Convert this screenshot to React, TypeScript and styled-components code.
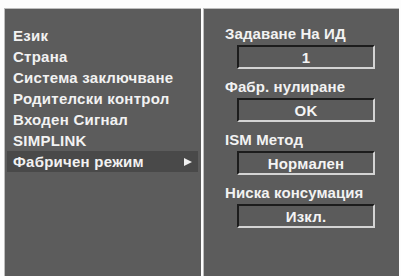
import React from "react";
import styled, { createGlobalStyle } from "styled-components";

const Global = createGlobalStyle`
  html, body { margin: 0; padding: 0; background: #ffffff; }
  body { font-family: "Liberation Sans", Arial, sans-serif; }
`;

const Screen = styled.div`
  display: flex;
  width: 401px;
  height: 276px;
  box-sizing: border-box;
  padding: 8px 2px 0 4px;
  gap: 2px;
  background: #fdfdfd;
`;

const Panel = styled.div<{ $w: number }>`
  width: ${(p) => p.$w}px;
  height: 100%;
  box-sizing: border-box;
  background: #5c5c5c;
  border-top: 1px solid #bdbdbd;
  border-left: 1px solid #bdbdbd;
  display: flex;
  flex-direction: column;
`;

const Menu = styled.div`
  display: flex;
  flex-direction: column;
  padding: 16px 3px 0 2px;
`;

const Row = styled.div<{ $active?: boolean }>`
  display: flex;
  align-items: center;
  justify-content: space-between;
  height: 21px;
  padding: 0 6px 0 6px;
  background: ${(p) => (p.$active ? "#494949" : "transparent")};
  color: #f2f2f2;
  font-size: 15px;
  letter-spacing: 0.25px;
  font-weight: bold;
  white-space: nowrap;
`;

const Arrow = styled.span`
  width: 0;
  height: 0;
  border-top: 4px solid transparent;
  border-bottom: 4px solid transparent;
  border-left: 8px solid #f0f0f0;
`;

const Settings = styled.div`
  display: flex;
  flex-direction: column;
  padding: 17px 0 0 21px;
`;

const Label = styled.div`
  color: #f2f2f2;
  font-size: 15px;
  letter-spacing: 0.1px;
  font-weight: bold;
  line-height: 16px;
  margin-bottom: 3px;
  white-space: nowrap;
`;

const ValueBox = styled.div`
  width: 138px;
  height: 24px;
  box-sizing: border-box;
  margin: 0 0 10px 12px;
  border-top: 2px solid #1c1c1c;
  border-left: 2px solid #1c1c1c;
  border-bottom: 2px solid #d4d4d4;
  border-right: 2px solid #d4d4d4;
  background: #5b5b5b;
  color: #f4f4f4;
  font-size: 15px;
  letter-spacing: 0.2px;
  font-weight: bold;
  display: flex;
  align-items: center;
  justify-content: center;
`;

const menuItems = [
  "Език",
  "Страна",
  "Система заключване",
  "Родителски контрол",
  "Входен Сигнал",
  "SIMPLINK",
  "Фабричен режим",
];

const settings = [
  { label: "Задаване На ИД", value: "1" },
  { label: "Фабр. нулиране", value: "OK" },
  { label: "ISM Метод", value: "Нормален" },
  { label: "Ниска консумация", value: "Изкл." },
];

export default function App() {
  return (
    <>
      <Global />
      <Screen>
        <Panel $w={197}>
          <Menu>
            {menuItems.map((m, i) => {
              const active = i === menuItems.length - 1;
              return (
                <Row key={m} $active={active}>
                  <span>{m}</span>
                  {active && <Arrow />}
                </Row>
              );
            })}
          </Menu>
        </Panel>
        <Panel $w={196}>
          <Settings>
            {settings.map((s) => (
              <React.Fragment key={s.label}>
                <Label>{s.label}</Label>
                <ValueBox>{s.value}</ValueBox>
              </React.Fragment>
            ))}
          </Settings>
        </Panel>
      </Screen>
    </>
  );
}
